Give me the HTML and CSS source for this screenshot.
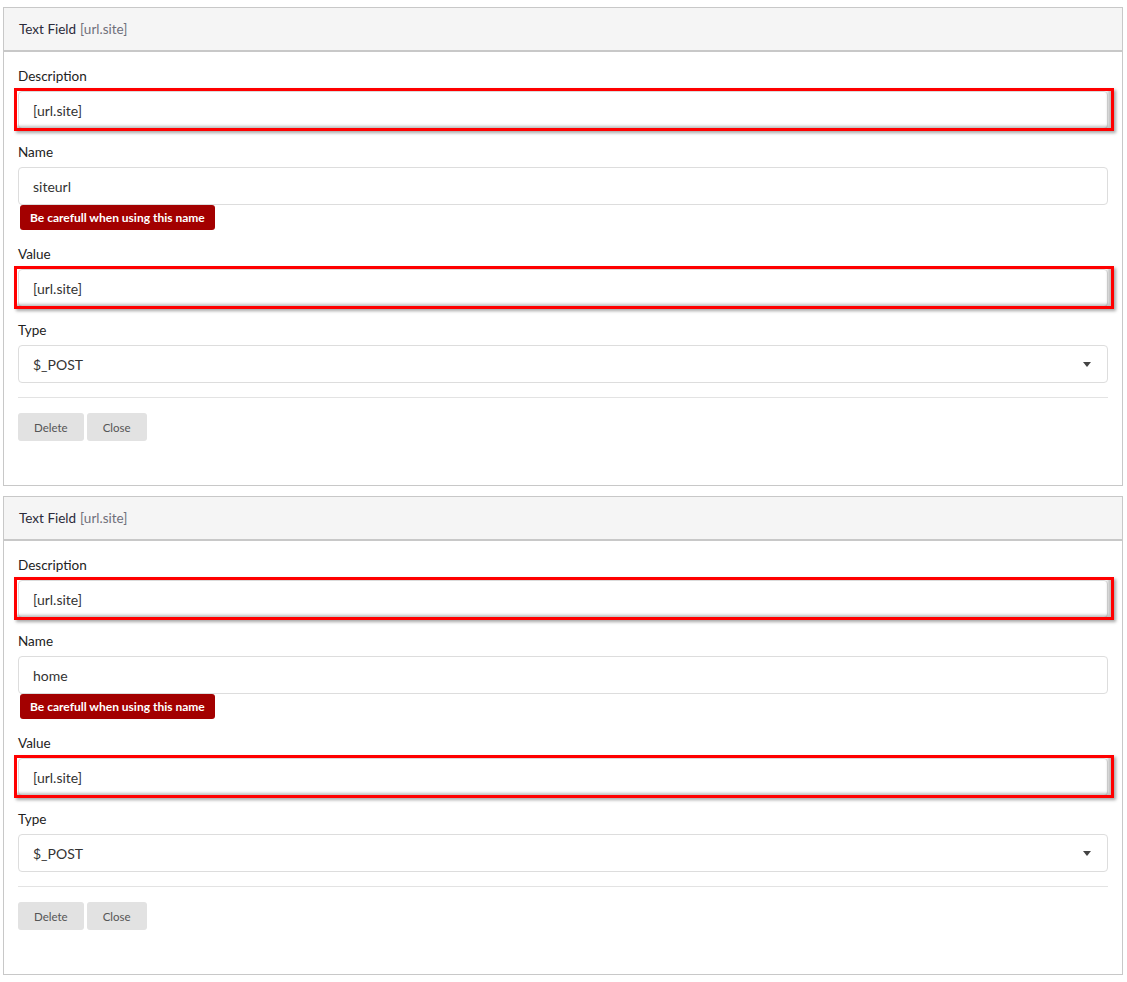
FILE: index.html
```html
<!DOCTYPE html>
<html lang="en">
<head>
<meta charset="utf-8">
<title>Text Fields</title>
<link rel="stylesheet" href="styles.css">
</head>
<body>
<div class="stack">
  <section class="panel">
    <header class="panel-head">Text Field <span class="muted">[url.site]</span></header>
    <div class="panel-body">
      <div class="group">
        <label class="label">Description</label>
        <div class="flag"><div class="input">[url.site]</div></div>
      </div>
      <div class="group group-warn">
        <label class="label">Name</label>
        <div class="input">siteurl</div>
        <span class="badge">Be carefull when using this name</span>
      </div>
      <div class="group">
        <label class="label">Value</label>
        <div class="flag"><div class="input">[url.site]</div></div>
      </div>
      <div class="group">
        <label class="label">Type</label>
        <div class="input select">$_POST<span class="caret"></span></div>
      </div>
      <hr class="rule">
      <div class="actions">
        <button class="btn">Delete</button>
        <button class="btn">Close</button>
      </div>
    </div>
  </section>

  <section class="panel">
    <header class="panel-head">Text Field <span class="muted">[url.site]</span></header>
    <div class="panel-body">
      <div class="group">
        <label class="label">Description</label>
        <div class="flag"><div class="input">[url.site]</div></div>
      </div>
      <div class="group group-warn">
        <label class="label">Name</label>
        <div class="input">home</div>
        <span class="badge">Be carefull when using this name</span>
      </div>
      <div class="group">
        <label class="label">Value</label>
        <div class="flag"><div class="input">[url.site]</div></div>
      </div>
      <div class="group">
        <label class="label">Type</label>
        <div class="input select">$_POST<span class="caret"></span></div>
      </div>
      <hr class="rule">
      <div class="actions">
        <button class="btn">Delete</button>
        <button class="btn">Close</button>
      </div>
    </div>
  </section>
</div>
</body>
</html>
```

FILE: styles.css
```css
* { box-sizing: border-box; }

body {
  margin: 0;
  padding: 7px 4px 0 3px;
  font-family: Lato, "Open Sans", "Liberation Sans", sans-serif;
  font-size: 14px;
  color: #333;
  background: #fff;
}

.stack {
  display: flex;
  flex-direction: column;
  gap: 10px;
}

.panel {
  border: 1px solid #c8c8c8;
  background: #fff;
  height: 479px;
}

.panel-head {
  height: 44px;
  padding: 0 15px;
  display: flex;
  align-items: center;
  gap: 4px;
  background: #f5f5f5;
  border-bottom: 2px solid #c8c8c8;
  font-size: 13.5px;
  color: #2b2b3a;
}

.muted { color: #6f6f7a; }

.panel-body {
  padding: 14px 14px 0 14px;
}

.group {
  display: flex;
  flex-direction: column;
  align-items: flex-start;
  margin-bottom: 13px;
}

.group-warn {
  margin-bottom: 14px;
}

.label {
  display: block;
  line-height: 20px;
  margin-bottom: 5px;
  color: #222;
  font-size: 13.5px;
}

.flag {
  position: relative;
  align-self: stretch;
}

/* red highlight frame drawn over the field */
.flag::after {
  content: "";
  position: absolute;
  top: -3px;
  left: -4px;
  right: -6px;
  bottom: -2px;
  border: 3px solid #ff0000;
  box-shadow: 2px 2px 3px rgba(0, 0, 0, 0.35), inset -3px -2px 3px rgba(0, 0, 0, 0.25);
  pointer-events: none;
}

.input {
  align-self: stretch;
  height: 38px;
  display: flex;
  align-items: center;
  padding: 0 14px;
  border: 1px solid #ddd;
  border-radius: 4px;
  background: #fff;
  color: #333;
  font-size: 14px;
}

.select {
  justify-content: space-between;
}

.caret {
  width: 0;
  height: 0;
  border-left: 4px solid transparent;
  border-right: 4px solid transparent;
  border-top: 5px solid #444;
  margin-right: 2px;
}

.badge {
  margin: 0 0 0 2px;
  height: 25px;
  display: inline-flex;
  align-items: center;
  padding: 0 10px;
  background: #a30000;
  color: #fff;
  font-size: 12px;
  font-weight: 700;
  border-radius: 3px;
}

.rule {
  border: 0;
  border-top: 1px solid #e3e3e3;
  margin: 14px 0 15px;
}

.actions {
  display: flex;
  gap: 3px;
}

.btn {
  height: 28px;
  padding: 0 16px;
  border: 0;
  border-radius: 3px;
  background: #e2e2e2;
  color: #555;
  font-family: inherit;
  font-size: 11.5px;
}
```
